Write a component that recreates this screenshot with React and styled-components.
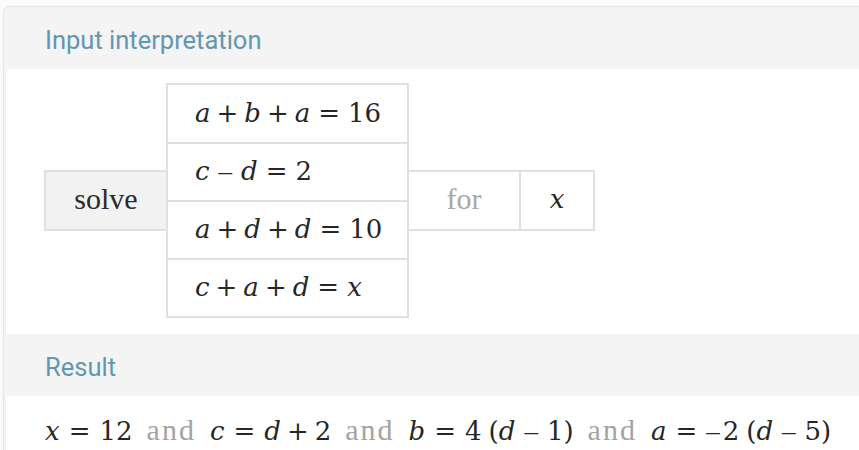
import React from "react";
import styled, { createGlobalStyle } from "styled-components";

const GlobalStyle = createGlobalStyle`
  html, body {
    margin: 0;
    padding: 0;
    background: #fbfbfb;
    overflow: hidden;
  }
`;

const Page = styled.div`
  width: 859px;
  height: 450px;
  overflow: hidden;
  padding-top: 6px;
  padding-left: 3px;
  box-sizing: border-box;
`;

const Pod = styled.div`
  width: 880px;
  background: #f4f4f4;
  border: 1px solid #e6e6e6;
  border-radius: 7px 0 0 0;
  box-shadow: 0 0 3px rgba(0, 0, 0, 0.05);
`;

const PodHeader = styled.div`
  height: 62px;
  display: flex;
  align-items: center;
  padding-left: 41px;
  padding-top: ${(p) => p.$top || 0}px;
  box-sizing: border-box;
  font-family: Roboto, "Noto Sans", sans-serif;
  font-size: 25.5px;
  color: #6297b1;
`;

const PodBody = styled.div`
  background: #fff;
  margin-left: 2px;
  border-radius: ${(p) => (p.$rounded ? "5px 0 0 0" : "0")};
  padding: ${(p) => p.$pad};
  font-family: "DejaVu Serif", "Liberation Serif", serif;
  color: #262626;
`;

const InputRow = styled.div`
  display: flex;
  align-items: center;
`;

const Cell = styled.div`
  box-sizing: border-box;
  display: flex;
  align-items: center;
  border: 2px solid #e0e0e0;
`;

const Word = styled.span`
  font-family: "Liberation Serif", "Times New Roman", serif;
  font-size: 30px;
  color: ${(p) => p.$color || "#2a2a2a"};
  letter-spacing: ${(p) => p.$ls || 0}px;
  margin: 0 ${(p) => p.$m || 0}px;
`;

const SolveCell = styled(Cell)`
  width: 122px;
  height: 61px;
  justify-content: center;
  background: #f2f2f2;
  border-right: none;
  padding-bottom: 4px;
`;

const EqColumn = styled.div`
  display: flex;
  flex-direction: column;
  width: 243px;
  border: 2px solid #e0e0e0;
  box-sizing: border-box;
`;

const EqCell = styled.div`
  height: 57px;
  display: flex;
  align-items: center;
  padding-left: 27px;
  padding-bottom: 2px;
  box-sizing: border-box;
  font-size: 26px;
  & + & {
    height: 58px;
    border-top: 2px solid #e0e0e0;
  }
`;

const SideCell = styled(Cell)`
  width: ${(p) => p.$w}px;
  height: 61px;
  justify-content: center;
  border-left: none;
  font-size: 26px;
  padding-bottom: 4px;
`;

const V = styled.span`
  font-style: italic;
`;

const Op = styled.span`
  display: inline-block;
  margin: 0 ${(p) => p.$m || 6}px;
`;

const Dash = styled.span`
  font-family: "Liberation Serif", "Times New Roman", serif;
  font-size: 27px;
  margin: 0 ${(p) => p.$m || 0}px;
  margin-right: ${(p) => (p.$unary ? 3 : p.$m || 0)}px;
`;

const Paren = styled.span`
  margin-left: 7px;
`;

const ResultLine = styled.div`
  display: flex;
  align-items: baseline;
  font-size: 26px;
  white-space: pre;
  line-height: 1;
`;

const Eq = ({ m = 8 }) => <Op $m={m}>=</Op>;
const Plus = () => <Op>+</Op>;
const Minus = () => <Dash $m={9}>–</Dash>;
const And = () => <Word $color="#a3a3a3" $ls={2} $m={14}>and</Word>;

export default function App() {
  return (
    <Page>
      <GlobalStyle />
      <Pod>
        <PodHeader $top={3}>Input interpretation</PodHeader>
        <PodBody $rounded $pad="14px 0 16px 38px">
          <InputRow>
            <SolveCell>
              <Word>solve</Word>
            </SolveCell>
            <EqColumn>
              <EqCell>
                <V>a</V><Plus /><V>b</V><Plus /><V>a</V><Eq />16
              </EqCell>
              <EqCell>
                <V>c</V><Minus /><V>d</V><Eq />2
              </EqCell>
              <EqCell>
                <V>a</V><Plus /><V>d</V><Plus /><V>d</V><Eq />10
              </EqCell>
              <EqCell>
                <V>c</V><Plus /><V>a</V><Plus /><V>d</V><Eq /><V>x</V>
              </EqCell>
            </EqColumn>
            <SideCell $w={112}>
              <Word $color="#a8a8a8">for</Word>
            </SideCell>
            <SideCell $w={74}>
              <V>x</V>
            </SideCell>
          </InputRow>
        </PodBody>
        <PodHeader $top={3}>Result</PodHeader>
        <PodBody $pad="19px 0 20px 39px">
          <ResultLine>
            <V>x</V><Eq m={9} />12<And />
            <V>c</V><Eq m={9} /><V>d</V><Plus />2<And />
            <V>b</V><Eq m={9} />4<Paren>(</Paren><V>d</V><Minus />1)<And />
            <V>a</V><Eq m={9} /><Dash $unary>–</Dash>2<Paren>(</Paren><V>d</V><Minus />5)
          </ResultLine>
        </PodBody>
      </Pod>
    </Page>
  );
}
